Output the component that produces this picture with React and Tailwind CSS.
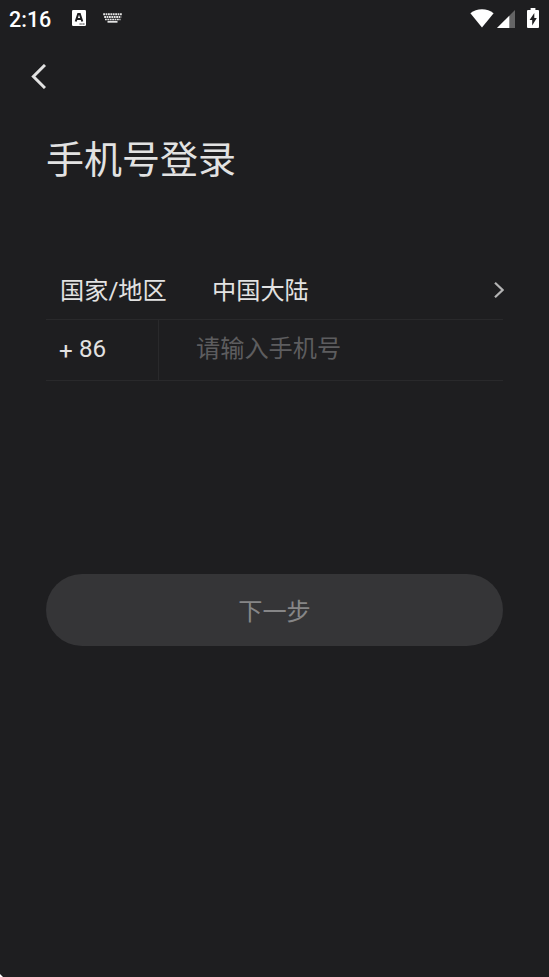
import React from 'react';

const WifiIcon = () => (
  <svg width="24" height="19" viewBox="0 0 24 19" fill="#fff">
    <path d="M12 18.6 L0.4 4.2 C3.6 1.6 7.6 0.2 12 0.2 C16.4 0.2 20.4 1.6 23.6 4.2 Z" />
  </svg>
);

const SignalIcon = () => (
  <svg width="18" height="18" viewBox="0 0 18 18">
    <path d="M18 0 V18 H0 Z" fill="#646465" />
    <path d="M12.3 5.7 V18 H0 Z" fill="#fff" />
  </svg>
);

const BatteryIcon = () => (
  <svg width="12" height="20" viewBox="0 0 12 20">
    <path d="M3.6 0 H8.4 V2 H11 Q12 2 12 3 V19 Q12 20 11 20 H1 Q0 20 0 19 V3 Q0 2 1 2 H3.6 Z" fill="#fff" />
    <path d="M7.3 5 L2.6 12 H5.2 V17.4 L9.8 10 H7.3 Z" fill="#1e1e20" />
  </svg>
);

const InputIcon = () => (
  <svg width="14" height="16" viewBox="0 0 14 16">
    <rect width="14" height="16" rx="1.2" fill="#fff" />
    <path d="M3.7 11.5 L6.2 4 H7.8 L10.3 11.5 M4.8 9 H9.2" fill="none" stroke="#1e1e20" strokeWidth="2" />
    <path d="M7.5 14 H13" stroke="#1e1e20" strokeWidth="1" strokeDasharray="1.3 0.5" />
  </svg>
);

const KeyboardIcon = () => (
  <svg width="19" height="10" viewBox="0 0 19 10" fill="none" stroke="#e4e4e4">
    <path d="M0.2 1.2 H19" strokeWidth="2" strokeDasharray="1.8 0.6" />
    <path d="M1.2 4 H18.2" strokeWidth="2" strokeDasharray="1.8 0.6" />
    <path d="M2 6.4 H17.5" strokeWidth="1.5" strokeDasharray="1.8 0.6" />
    <path d="M4.5 8.8 H14.5" strokeWidth="1.8" />
  </svg>
);

const StatusBar = () => (
  <div className="flex h-9 items-center justify-between pl-[9px] pr-[10px]">
    <div className="flex items-center">
      <span className="w-[63px] pt-[3px] font-['Roboto',sans-serif] text-[21.5px] leading-none font-medium text-white">2:16</span>
      <InputIcon />
      <span className="ml-[17px]">
        <KeyboardIcon />
      </span>
    </div>
    <div className="flex items-center">
      <WifiIcon />
      <span className="ml-[3px] pt-px">
        <SignalIcon />
      </span>
      <span className="ml-3">
        <BatteryIcon />
      </span>
    </div>
  </div>
);

const App = () => {
  return (
    <div className="flex h-[977px] w-full flex-col bg-[#1e1e20] font-['Roboto','Noto_Sans_CJK_SC',sans-serif] text-[#e2e2e2]">
      <StatusBar />

      <button className="mt-7 ml-[31px] h-6 w-[15px]" aria-label="返回">
        <svg width="15" height="25" viewBox="0 0 15 25" fill="none" stroke="#e2e2e2" strokeWidth="3">
          <path d="M14 1 L2.4 12.5 L14 24" />
        </svg>
      </button>

      <main className="mr-[46px] ml-[46px] flex flex-col">
        <h1 className="mt-[44px] h-14 text-[38px] leading-[56px]">手机号登录</h1>

        {/* Country / region */}
        <div className="mt-[72px] flex h-[60px] items-center border-b border-[#29292b] pl-[14px] text-[24.2px]">
          <span className="w-[152px] pt-1">国家/地区</span>
          <span className="flex-1 pt-1">中国大陆</span>
          <svg className="-mr-px" width="10" height="16" viewBox="0 0 10 16" fill="none" stroke="#b4b4b4" strokeWidth="2.2">
            <path d="M1 0.8 L8.6 8 L1 15.2" />
          </svg>
        </div>

        {/* Phone number */}
        <div className="flex h-[61px] border-b border-[#29292b] text-[24.2px]">
          <div className="flex w-[113px] border-r border-[#29292b] pl-[13px] leading-[59px]">
            <span className="w-[20px] pt-0.5">+</span>
            <span>86</span>
          </div>
          <span className="pl-[37px] leading-[59px] text-[#5d5d5f]">请输入手机号</span>
        </div>

        <button className="mt-[193px] h-[72px] rounded-full bg-[#353537] pt-[5px] text-[24.2px] text-[#868687]">下一步</button>
      </main>

      {/* Window corner */}
      <div className="mt-auto h-[3px] w-[3px] bg-white [clip-path:polygon(0_0,100%_100%,0_100%)]" />
    </div>
  );
};

export default App;
